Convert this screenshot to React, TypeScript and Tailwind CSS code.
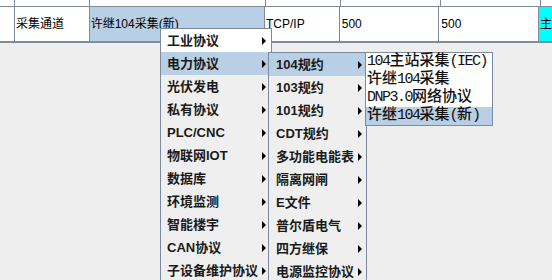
import { FC } from 'react';

const menuOne: string[] = [
  '工业协议',
  '电力协议',
  '光伏发电',
  '私有协议',
  'PLC/CNC',
  '物联网IOT',
  '数据库',
  '环境监测',
  '智能楼宇',
  'CAN协议',
  '子设备维护协议',
];

const menuTwo: string[] = [
  '104规约',
  '103规约',
  '101规约',
  'CDT规约',
  '多功能电能表',
  '隔离网闸',
  'E文件',
  '普尔盾电气',
  '四方继保',
  '电源监控协议',
];

const menuThree: string[] = ['104主站采集(IEC)', '许继104采集', 'DNP3.0网络协议', '许继104采集(新)'];

const Arrow: FC = () => (
  <span className="h-0 w-0 border-y-[4px] border-l-[4px] border-y-transparent border-l-black" />
);

// latin runs are drawn half width, like the song-style font in the screenshot
const HalfWidth: FC<{ text: string }> = ({ text }) => {
  const parts = text.split(/([\x00-\x7f]+)/).filter((p) => p !== '');
  return (
    <>
      {parts.map((p, i) =>
        /^[\x00-\x7f]+$/.test(p) ? (
          <span key={i} className="tracking-[-1.5px]">
            {p}
          </span>
        ) : (
          <span key={i}>{p}</span>
        ),
      )}
    </>
  );
};

const App: FC = () => {
  return (
    <div className="relative h-[280px] w-[552px] overflow-hidden bg-[#eeeeee] font-['Liberation_Sans','Noto_Sans_CJK_SC',sans-serif] text-[12px] text-black">
      {/* table */}
      <div className="flex flex-col">
        <div className="flex h-[7px] border-b border-[#7f8c99] bg-white">
          <div className="w-[15px] border-r border-[#7f8c99]" />
          <div className="w-[75px] border-r border-[#7f8c99]" />
          <div className="w-[176px] border-r border-[#7f8c99]" />
          <div className="w-[75px] border-r border-[#7f8c99]" />
          <div className="w-[100px] border-r border-[#7f8c99]" />
          <div className="w-[100px] border-r border-[#7f8c99]" />
          <div className="flex-1" />
        </div>
        <div className="flex h-[36px] border-b-2 border-[#7f8c99] bg-white leading-none">
          <div className="w-[15px] border-r border-[#7f8c99]" />
          <div className="flex w-[75px] items-center border-r border-[#7f8c99] pl-px">采集通道</div>
          <div className="flex w-[176px] items-center border-r border-[#7f8c99] bg-[#b8cfe5] pl-px">
            许继104采集(新)
          </div>
          <div className="flex w-[75px] items-center border-r border-[#7f8c99] pl-px">TCP/IP</div>
          <div className="flex w-[100px] items-center border-r border-[#7f8c99] pl-[2px]">500</div>
          <div className="flex w-[100px] items-center border-r border-[#7f8c99] pl-[2px]">500</div>
          <div className="flex flex-1 items-center bg-[#00ffff] pl-px">主</div>
        </div>
      </div>

      {/* first popup */}
      <div className="absolute left-[160px] top-[28px] w-[112px] border border-[#7a8aa0] bg-[#efefef] text-[13px] font-bold text-[#1a1a1a]">
        {menuOne.map((item, i) => (
          <div
            key={item}
            className={
              i === 0
                ? 'flex h-[23px] items-center justify-between bg-white pl-[6px] pr-[5px]'
                : i === 1
                  ? 'flex h-[23px] items-center justify-between bg-[#b8cfe5] pl-[6px] pr-[5px]'
                  : 'flex h-[23px] items-center justify-between pl-[6px] pr-[5px]'
            }
          >
            <span>{item}</span>
            <Arrow />
          </div>
        ))}
      </div>

      {/* second popup */}
      <div className="absolute left-[268px] top-[52px] w-[99px] border border-[#7a8aa0] bg-[#efefef] text-[13px] font-bold text-[#1a1a1a]">
        {menuTwo.map((item, i) => (
          <div
            key={item}
            className={
              i === 0
                ? 'flex h-[23px] items-center justify-between bg-[#b8cfe5] pl-[7px] pr-[4px]'
                : 'flex h-[23px] items-center justify-between pl-[7px] pr-[4px]'
            }
          >
            <span>{item}</span>
            <Arrow />
          </div>
        ))}
      </div>

      {/* third popup */}
      <div className="absolute left-[365px] top-[52px] w-[128px] border border-[#7a8aa0] bg-white font-['Liberation_Mono','Noto_Sans_CJK_SC',monospace] text-[15px] font-medium text-[#111]">
        {menuThree.map((item, i) => (
          <div
            key={item}
            className={
              i === 3
                ? 'flex h-[18px] items-center whitespace-nowrap bg-[#b8cfe5] pl-px'
                : 'flex h-[18px] items-center whitespace-nowrap pl-px'
            }
          >
            <HalfWidth text={item} />
          </div>
        ))}
      </div>
    </div>
  );
};

export default App;
